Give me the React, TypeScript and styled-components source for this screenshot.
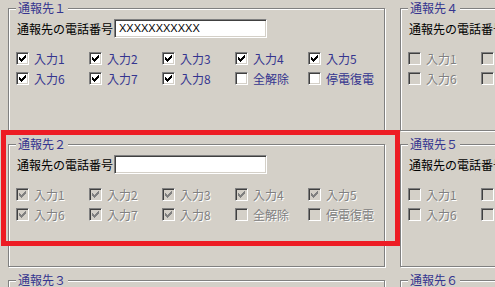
import styled, { createGlobalStyle } from "styled-components";

type GroupData = {
  title: string;
  phone: string;
  enabled: boolean;
  checked: boolean;
};

const GROUPS: GroupData[] = [
  { title: "通報先１", phone: "XXXXXXXXXXX", enabled: true, checked: true },
  { title: "通報先２", phone: "", enabled: false, checked: true },
  { title: "通報先３", phone: "", enabled: false, checked: true },
  { title: "通報先４", phone: "", enabled: false, checked: false },
  { title: "通報先５", phone: "", enabled: false, checked: false },
  { title: "通報先６", phone: "", enabled: false, checked: false },
];

const ITEMS = [
  { label: "入力1", input: true },
  { label: "入力2", input: true },
  { label: "入力3", input: true },
  { label: "入力4", input: true },
  { label: "入力5", input: true },
  { label: "入力6", input: true },
  { label: "入力7", input: true },
  { label: "入力8", input: true },
  { label: "全解除", input: false },
  { label: "停電復電", input: false },
];

export default function App() {
  return (
    <>
      <GlobalStyle />
      <Screen>
        <Columns>
          {GROUPS.map((g) => (
            <GroupBox key={g.title}>
              <GroupTitle>{g.title}</GroupTitle>
              <PhoneRow>
                <PhoneLabel>通報先の電話番号</PhoneLabel>
                <PhoneField>{g.phone}</PhoneField>
              </PhoneRow>
              <CheckGrid>
                {ITEMS.map((item) => {
                  const checked = item.input && g.checked;
                  return (
                    <CheckItem key={item.label}>
                      <Box $disabled={!g.enabled}>
                        {checked && <CheckMark disabled={!g.enabled} />}
                      </Box>
                      <CheckLabel $disabled={!g.enabled}>{item.label}</CheckLabel>
                    </CheckItem>
                  );
                })}
              </CheckGrid>
            </GroupBox>
          ))}
        </Columns>
        <Highlight />
      </Screen>
    </>
  );
}

function CheckMark({ disabled }: { disabled: boolean }) {
  return (
    <svg width="7" height="7" viewBox="0 0 7 7" shapeRendering="crispEdges">
      <path
        fill={disabled ? "#808080" : "#000"}
        d="M6 0h1v1H6zM5 1h2v1H5zM0 2h1v1H0zM4 2h3v1H4zM0 3h2v1H0zM3 3h3v1H3zM0 4h5v1H0zM1 5h3v1H1zM2 6h1v1H2z"
      />
    </svg>
  );
}

const GlobalStyle = createGlobalStyle`
  html, body {
    margin: 0;
    padding: 0;
    background: #d4d0c8;
  }
  body {
    font-family: "Noto Sans CJK JP", "Noto Sans", sans-serif;
    font-size: 12px;
  }
`;

const Screen = styled.div`
  position: relative;
  width: 495px;
  height: 287px;
  overflow: hidden;
  background: #d4d0c8;
`;

const Columns = styled.div`
  display: grid;
  grid-auto-flow: column;
  grid-template-rows: repeat(3, 123px);
  grid-template-columns: 377px 377px;
  column-gap: 15px;
  row-gap: 13px;
  padding: 8px 0 0 8px;
`;

const GroupBox = styled.div`
  position: relative;
  box-sizing: border-box;
  border: 1px solid #808080;
  box-shadow: inset 1px 1px #fff, 1px 1px #fff;
  padding: 10px 0 0 7px;
`;

const GroupTitle = styled.span`
  position: absolute;
  top: -7px;
  left: 7px;
  padding: 0 2px;
  background: #d4d0c8;
  color: #35358f;
  font-size: 12px;
  line-height: 12px;
  white-space: nowrap;
`;

const PhoneRow = styled.div`
  display: flex;
  align-items: center;
  gap: 1px;
  padding-left: 1px;
  height: 19px;
`;

const PhoneLabel = styled.span`
  color: #000;
  font-size: 12px;
  line-height: 12px;
  white-space: nowrap;
`;

const PhoneField = styled.div`
  box-sizing: border-box;
  width: 153px;
  height: 19px;
  flex: none;
  background: #fff;
  border: 1px solid;
  border-color: #808080 #fff #fff #808080;
  box-shadow: inset 1px 1px #404040, inset -1px -1px #d4d0c8;
  padding: 0 0 0 4px;
  font-family: "Liberation Sans", Arial, sans-serif;
  font-size: 11px;
  line-height: 17px;
  color: #000;
  white-space: nowrap;
  overflow: hidden;
`;

const CheckGrid = styled.div`
  display: grid;
  grid-template-columns: repeat(5, 73px);
  row-gap: 7px;
  margin-top: 14px;
`;

const CheckItem = styled.div`
  display: flex;
  align-items: center;
  gap: 5px;
  height: 13px;
  white-space: nowrap;
`;

const Box = styled.span<{ $disabled: boolean }>`
  box-sizing: border-box;
  width: 13px;
  height: 13px;
  flex: none;
  display: flex;
  align-items: center;
  justify-content: center;
  border: 1px solid;
  border-color: #808080 #fff #fff #808080;
  box-shadow: inset 1px 1px #404040, inset -1px -1px #d4d0c8;
  background: ${(p) => (p.$disabled ? "#d4d0c8" : "#fff")};
`;

const CheckLabel = styled.span<{ $disabled: boolean }>`
  font-size: 12px;
  line-height: 13px;
  color: ${(p) => (p.$disabled ? "#808080" : "#35358f")};
  text-shadow: ${(p) => (p.$disabled ? "1px 1px #fff" : "none")};
`;

const Highlight = styled.div`
  position: absolute;
  left: 1px;
  top: 130px;
  width: 399px;
  height: 116px;
  box-sizing: border-box;
  border: 5px solid #ed1c24;
  pointer-events: none;
`;
